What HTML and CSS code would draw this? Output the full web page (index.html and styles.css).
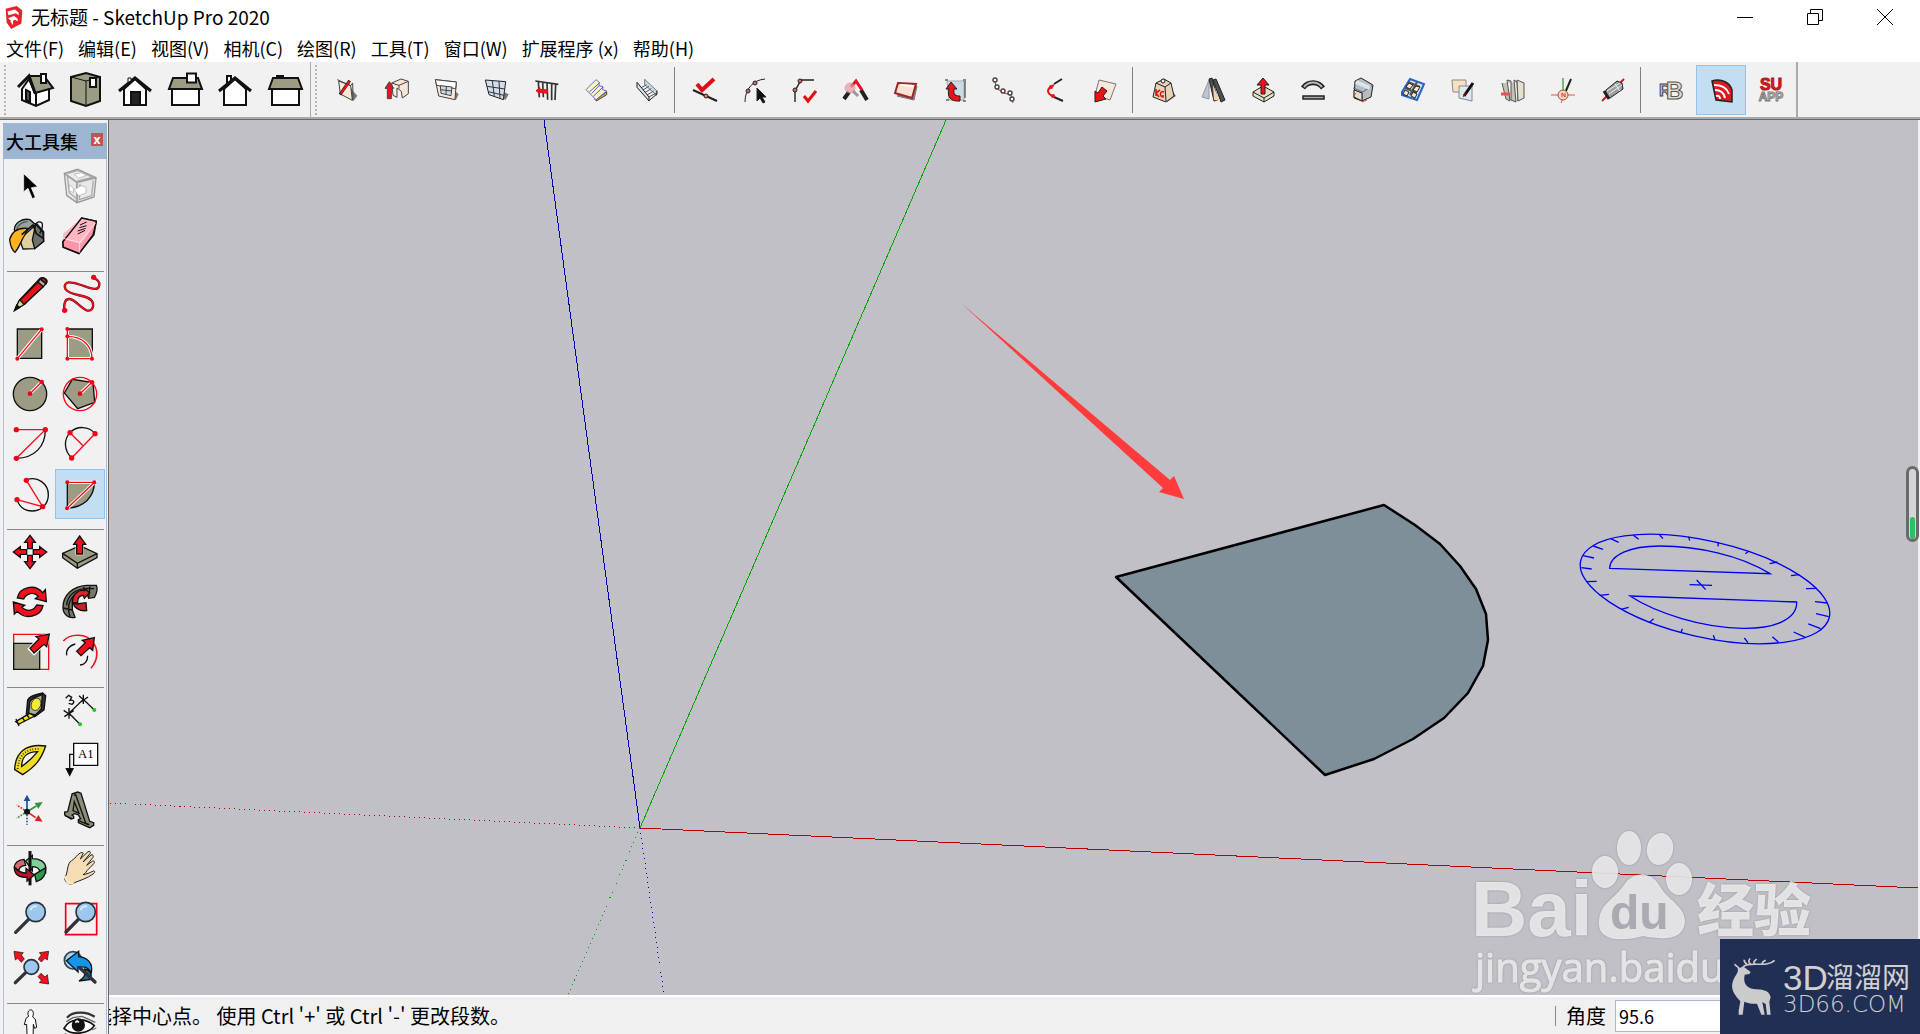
FILE: index.html
```html
<!DOCTYPE html>
<html lang="zh-CN">
<head>
<meta charset="utf-8">
<title>无标题 - SketchUp Pro 2020</title>
<link rel="stylesheet" href="styles.css">
</head>
<body>
<div class="app">
<header class="titlebar">
  <svg class="app-icon" viewBox="0 0 20 26" aria-hidden="true"><path d="M1 4 13 1 19 6 18 20 7 26 2 19Z" fill="#e6232a"/><path d="M3 7l8-2 4 3v3l-3-2-8 2zM4 14l6-2 4 3v3l-3-2-2 1v5l-3-4 1-1-3-2z" fill="#fff"/></svg>
  <h1>无标题 - SketchUp Pro 2020</h1>
  <div class="window-controls">
    <button aria-label="最小化"><svg viewBox="0 0 16 16"><path d="M0 8.500H16"/></svg></button>
    <button aria-label="还原"><svg viewBox="0 0 16 16"><path d="M.5 4.500h11v11H.5zM3.500 4.500v-4h12v11h-4"/></svg></button>
    <button aria-label="关闭"><svg viewBox="0 0 16 16"><path d="M0 0 16 16M16 0 0 16"/></svg></button>
  </div>
</header>
<nav class="menubar">
  <button>文件(F)</button><button>编辑(E)</button><button>视图(V)</button><button>相机(C)</button><button>绘图(R)</button><button>工具(T)</button><button>窗口(W)</button><button>扩展程序 (x)</button><button>帮助(H)</button>
</nav>
<div class="toolbars">
  <div class="toolbar" role="toolbar" aria-label="视图">
    <span class="grip"></span>
    <button class="tool" aria-label="等轴"><svg viewBox="0 0 50 50" class="ink"><path class="w" d="M12 24 19 14 25 28 39 23V35L26 41 12 35Z"/><path class="o" d="M19 11 34 11 43 23 25 28Z"/><path d="M8 22 19 11 25 28" stroke-width="3"/><path d="M16 25l4 2v10l-4-2z" fill="#555"/><path d="M26 28v12"/><path class="w" d="M31 9h5v9h-5z"/></svg></button>
    <button class="tool" aria-label="俯视图"><svg viewBox="0 0 50 50" class="ink"><path class="o" d="M11 12 26 8 40 12V36L26 41 11 36Z"/><path d="M11 12 26 16 40 12M26 16V40" stroke-width="1"/><path class="w" d="M30 13h6v9h-6z"/></svg></button>
    <button class="tool" aria-label="前视图"><svg viewBox="0 0 50 50" class="ink"><path class="w" d="M14 24 25 14 36 24V40H14Z"/><path d="M21 27h9v13h-9z" fill="#222"/><path d="M9 26 25 13 41 26" stroke-width="3"/><path class="w" d="M18 17v-4h3v2" stroke-width="1"/></svg></button>
    <button class="tool" aria-label="右视图"><svg viewBox="0 0 50 50" class="ink"><path class="w" d="M12 24H39V40H12Z"/><path class="o" d="M13 13H38L42 24H9Z"/><path class="w" d="M27 8.500h9v9h-9z"/></svg></button>
    <button class="tool" aria-label="后视图"><svg viewBox="0 0 50 50" class="ink"><path class="w" d="M17 20V11h4v6"/><path class="w" d="M14 24 25 14 36 24V40H14Z"/><path d="M9 26 25 13 41 26" stroke-width="3"/></svg></button>
    <button class="tool" aria-label="左视图"><svg viewBox="0 0 50 50" class="ink"><path class="w" d="M17 13v-2h6v2M12 24H39V40H12Z"/><path class="o" d="M13 13H38L42 24H9Z"/></svg></button>
  </div>
  <div class="toolbar" role="toolbar" aria-label="SUAPP">
    <span class="grip"></span>
    <button class="tool" aria-label="绘制墙体"><svg viewBox="66 18 150 150" class="fine"><path class="s" d="M148 75l10 20 14 15-12 17z"/><path class="t" d="M116 66l36 14 5 44-36-19z"/><path d="M112 62l40 18 6-8 1 38-2 14"/><path d="M149 65 120 107" stroke="#222" stroke-width="9"/><path d="M149 66 122 104" stroke="#e8141c" stroke-width="6"/></svg></button>
    <button class="tool" aria-label="拉线成面"><svg viewBox="216 18 150 150" class="fine"><path class="t" d="M275 72l28-12 22 7v37l-18 13-3-20-13-10v28l-12-6z"/><path d="M275 72l22 7 28-12M297 79v10"/><path class="r" d="M268 68l13 20h-7v31h-12V88h-7z"/></svg></button>
    <button class="tool" aria-label="墙体开窗"><svg viewBox="366 18 150 150" class="fine"><path class="s" d="M458 90l18 16-8 16-20-4z"/><path class="t" d="M406 62l63 7-4 53-49-11z"/><path class="w" d="M406 62l63 7-2 20-57-10z"/><path d="M421 80l35 4-3 26-30-7z" fill="#cbdbe7"/><path d="M439 82l-1 24M422 92l33 4"/></svg></button>
    <button class="tool" aria-label="玻璃幕墙"><svg viewBox="516 18 150 150" class="fine"><path class="s" d="M610 98l16 8-9 16-10-3z"/><path class="g" d="M556 63l61 5-7 54-43-15z" stroke="#222" stroke-width="3"/><path d="M577 65l6 48M597 66l3 52M561 82l54 8M565 98l47 11" stroke="#333" stroke-width="3"/></svg></button>
    <button class="tool" aria-label="线转栏杆"><svg viewBox="666 18 150 150" class="fine"><path d="M706 66l69 10M715 68l3 47M728 70l2 45M741 72l2 50M755 74v50M767 76l-2 47" stroke="#333" stroke-width="5"/><path class="r" d="M708 95l12-9v5l23 2-1 10-22-3-1 4z" stroke="#e01018"/></svg></button>
    <button class="tool" aria-label="双跑楼梯"><svg viewBox="816 18 150 150" class="fine"><path class="s" d="M914 92l8 13-33 20-8-4z"/><path d="M888 122l32-24v9l-31 19z" fill="#c8ab69"/><path d="M858 92l30-30 10 8-1 10 12 3-1 9 12 4-32 26z" fill="#faf3c8" stroke="#656ad1" stroke-width="3"/><path d="M898 72l-30 27M897 80l-22 24M909 84l-29 28" stroke="#555cc8" stroke-width="3"/></svg></button>
    <button class="tool" aria-label="自动扶梯"><svg viewBox="966 18 150 150" class="fine"><path d="M1034 61l36 34v14l-36-32z" fill="#c6dde8" stroke="#444" stroke-width="2"/><path d="M1020 88l20-11M1027 94l20-12M1034 101l20-12M1041 108l20-12M1047 114l22-12" stroke="#555" stroke-width="3"/><path d="M1011 70l36 44v12l-36-41z" fill="#d3e5ea" stroke="#222" stroke-width="3"/><path d="M1047 125l24-20v-10" stroke="#222" stroke-width="3"/></svg></button>
    <span class="sep"></span>
    <button class="tool" aria-label="修复直线"><svg viewBox="0 0 50 50" class="fine1"><path d="M13 25l24 11" stroke-width="2"/><path d="M17 19l5 6 12-11" stroke="#e20b12" stroke-width="4"/><circle cx="26" cy="31" r="2" fill="#e88264"/></svg></button>
    <button class="tool" aria-label="选连续线"><svg viewBox="0 0 50 50" class="fine1"><path d="M15 37c0-13 8-22 20-23"/><circle cx="18" cy="26" r="2" fill="#d56d5d"/><circle cx="25" cy="18" r="2" fill="#d56d5d"/><path d="M27 23v13l3-3 3 5 2-1-3-5h4z" fill="#111"/></svg></button>
    <button class="tool" aria-label="焊接线条"><svg viewBox="0 0 50 50" class="fine1"><path d="M15 37V26l6-11h13" stroke-width="1.400"/><circle cx="15" cy="25" r="2" fill="#d56d5d"/><circle cx="20" cy="16" r="2" fill="#d56d5d"/><path d="M24 31l4 5 8-10" stroke="#e20b12" stroke-width="3"/></svg></button>
    <button class="tool" aria-label="查找线头"><svg viewBox="0 0 50 50" class="fine1"><path d="M14 34l5-7M31 25l6 10" stroke-width="4"/><path d="M21 22l5-6 6 9" stroke="#e90c31" stroke-width="3"/><circle cx="20" cy="23" r="5" fill="#e99a9a" opacity=".7" stroke="#c99"/><path d="M23 26l5 5" stroke="#999" stroke-width="3"/></svg></button>
    <button class="tool" aria-label="生成面域"><svg viewBox="0 0 50 50" class="fine1"><path d="M17 31l17 4 3-14-3 2z" fill="#888" stroke="#777"/><path d="M18 18l18 1-4 14-17-5z" fill="#fbe2d2" stroke="#9b2727" stroke-width="2"/><path d="M20 20l13 1" stroke="#fff" stroke-width="2"/></svg></button>
    <button class="tool" aria-label="路径翻转"><svg viewBox="0 0 50 50" class="fine1"><path d="M17 16h17v19H19z" fill="#c9dbe4" stroke="#aaa"/><path d="M15 15h3M33 15h3M16 35h3M33 36h3M35 16v17"/><path d="M21 17l6 7h-3c-1 6 2 7 6 7v5c-10 1-13-5-11-12h-3z" fill="#ed1118"/></svg></button>
    <button class="tool" aria-label="路径阵列"><svg viewBox="0 0 50 50" class="fine1"><path d="M15 16l1 7 8 5 7 2 2 8" stroke="#d32424"/><g fill="#fff" stroke="#444" stroke-width="1.400"><circle cx="15" cy="15" r="2"/><circle cx="17" cy="22" r="2"/><circle cx="23" cy="26" r="2"/><circle cx="30" cy="28" r="2"/><circle cx="32" cy="34" r="2"/></g></svg></button>
    <button class="tool" aria-label="三维偏移"><svg viewBox="0 0 50 50" class="fine1"><path d="M24 19l8-5M24 32l9 4" stroke-width="2"/><path d="M24 20c-8 4-8 8 0 12" stroke="#e4141b" stroke-width="2"/><circle cx="21" cy="22" r="2" fill="#ed1118" stroke="none"/><circle cx="23" cy="31" r="2" fill="#ed1118" stroke="none"/></svg></button>
    <button class="tool" aria-label="滑动拉伸"><svg viewBox="0 0 50 50" class="fine1"><path d="M19 15l17 4-6 16-15-5z" fill="#fbe8dc" stroke="#777"/><path d="M22 22l5 4-4 5 3 3-11 3v-11l3 2z" fill="#ed1118"/></svg></button>
    <span class="sep"></span>
    <button class="tool" aria-label="体积计算"><svg viewBox="0 0 50 50" class="fine1"><path d="M30 20l8 11-9 6z" fill="#777" stroke="none"/><path d="M18 18l8-4 7 4 3 13-8 6-13-5z" fill="#e7d3b5"/><path d="M18 18l9 4 6-4M27 22l1 14"/><circle cx="25" cy="16" r="2" fill="#eee"/><path d="M18 24v7M18 28l4-3M18 28l3 4M26 27c-4-2-5 5-1 5v-2" stroke="#d21a18" stroke-width="1.600"/></svg></button>
    <button class="tool" aria-label="镜像物体"><svg viewBox="0 0 50 50" class="fine1"><path d="M14 32l7-17v19z" fill="#b6c7d6" stroke="#999"/><path d="M21 14l3-1 6 22-4 1zM25 15l3-1 9 21-4 2z" fill="#4c5154"/><path d="M25 20l7 16-6-1z" fill="#f3d1ac" stroke="none"/></svg></button>
    <button class="tool" aria-label="推拉"><svg viewBox="0 0 50 50" class="fine1"><path d="M15 27l10-6 11 6v4L26 37l-11-6z" fill="#e5dec5"/><path d="M15 27l11 6 10-6M26 33v4"/><path class="r" d="M25 13l6 7h-4v9h-4v-9h-4z"/></svg></button>
    <button class="tool" aria-label="形体弯曲"><svg viewBox="0 0 50 50" class="fine1"><path d="M15 23c5-7 15-7 20 0" stroke="#222" stroke-width="5"/><path d="M16 22c5-6 13-6 18 0" stroke="#bbb" stroke-width="2"/><path d="M15 31h21v3H15z" fill="#aaa" stroke-width="1.500"/></svg></button>
    <button class="tool" aria-label="超级圆角"><svg viewBox="0 0 50 50" class="fine1"><path d="M17 16l6-3 12 7-2 12-9 4-8-3z" fill="#b7bdc1"/><path d="M15 23l10 4 10-7M24 27v9" stroke="#667"/><path d="M16 25l8 3v8l-8-4z" fill="#e4dfcf"/><path d="M18 17l14 6" stroke="#d8e6ee" stroke-width="4"/><path d="M15 32l3-4M24 37l5-2" stroke="#e44"/></svg></button>
    <button class="tool" aria-label="组件"><svg viewBox="0 0 50 50" class="fine1"><path d="M14 27l8-13 14 5-7 16-15-5z" fill="#d8e2e9" stroke="#2864c7" stroke-width="2"/><path d="M20 17l12 5M17 23l12 5M22 30l7-13" stroke="#555" stroke-width="2"/><path d="M21 18l4 2-3 4-4-2zM28 21l4 1-3 5-4-2zM17 25l4 2-2 4-4-2zM25 27l4 2-2 4-4-2z" fill="#f2e7d2"/></svg></button>
    <button class="tool" aria-label="材质拾取"><svg viewBox="0 0 50 50" class="fine1"><path d="M14 15h14v12H15z" fill="#f7dfc2" stroke="#888"/><path d="M21 21h13v15l-13-3z" fill="#dfe8ee" stroke="#888"/><path d="M35 18 26 31" stroke="#111" stroke-width="3"/><path d="M28 28l-3 4" stroke="#e00"/></svg></button>
    <button class="tool" aria-label="场景分类"><svg viewBox="0 0 50 50" class="fine1"><path d="M14 18l4 16 4 2-3-21 4 1v19l5 2-2-22 3 2 1 19 5-4V17" fill="#c5c1b6" stroke="#555"/><path d="M29 15l7 3v15l-6 3z" fill="#e6dfcd" stroke="#555"/><path d="M13 29h9" stroke="#e65252" stroke-width="3"/></svg></button>
    <button class="tool" aria-label="坐标轴"><svg viewBox="0 0 50 50" class="fine1"><path d="M25 13v16" stroke="#7ab979" stroke-width="2"/><path d="M33 14l-6 14" stroke-width="2"/><path d="M13 30h24M23 38l3-7" stroke="#f04a4a" stroke-width="1"/><circle cx="25" cy="30" r="5" fill="#ffd3bd" stroke="#8c5d50"/><path d="M24 32v-4l3 4v-4" stroke="#e33"/></svg></button>
    <button class="tool" aria-label="智能推送"><svg viewBox="0 0 50 50" class="fine1"><path d="M14 36l22-22" stroke="#d11" stroke-width="2"/><path d="M18 25l11-9 5 2 1 6-13 9-5-4z" fill="#9b9d9f"/><path d="M19 26l13-8M21 29l13-9M27 19l5 7" stroke="#eee"/><path d="M16 26l5 8" stroke-width="3"/></svg></button>
    <span class="sep"></span>
    <button class="tool" aria-label="RB 渲染"><svg viewBox="0 0 50 50" class="fine1"><text x="13" y="31" class="logo-r">R</text><text x="20" y="34" class="logo-b">B</text></svg></button>
    <button class="tool active" aria-label="SUAPP 面板" aria-pressed="true"><svg viewBox="0 0 50 50" class="fine1"><path d="M16 16c10-3 18 2 20 9v12L20 35z" fill="#e01820" stroke-width="1.500"/><path d="M18 20c8 0 13 3 15 9M19 25c6 0 9 3 10 8M20 31c3-1 4 1 4 3" stroke="#fff" stroke-width="2"/></svg></button>
    <button class="tool" aria-label="SUAPP"><svg viewBox="0 0 50 50"><text x="25" y="25" class="logo-su">SU</text><text x="25" y="36" class="logo-app">APP</text></svg></button>
  </div>
</div>
<div class="workspace">
  <aside class="palette">
    <div class="palette-head"><h2>大工具集</h2><button class="palette-close" aria-label="关闭工具集">x</button></div>
    <div class="palette-body">
      <div class="tool-grid">
        <button class="tool" aria-label="选择"><svg viewBox="15 138 150 150"><path d="M71 176v54l13-10 13 31 9-4-12-29 19-3z" fill="#000" stroke="#fff" stroke-width="2"/></svg></button>
        <button class="tool" aria-label="制作组件"><svg viewBox="165 138 150 150" fill="none" stroke="#aaa" stroke-width="4"><path d="M193 175l40-12 55 25-6 58-51 17-31-22z" fill="#e9e9e9" stroke="#999"/><path d="M193 175l38 27 57-14M231 202v61" stroke="#999" stroke-width="5"/><path d="M202 182l6 51 22 18M240 206l-2 48 37-12 5-46M201 176l33-10 44 21-46 11"/><path d="M208 210l12 8v15l-12-6zM222 224l22-12 14 5v17l-22 8zM222 178l22-5 16 8-24 8z" fill="#fff" stroke-width="2"/></svg></button>
        <button class="tool" aria-label="材质"><svg viewBox="15 288 150 150" class="ink3"><path d="M74 321l38 7 19 22v29l-27 22-35 1-14-40z" fill="#e0cf9e"/><path d="M107 328l21 22 3 29-27 22-7-26z" fill="#6e706b"/><path d="M43 345c0-22 24-36 47-31l17 15-39 36z" fill="#96a49d"/><path d="M50 343c4-14 18-23 32-23" stroke="#555"/><path d="M29 374c8-29 31-36 53-34l-6 17c-15 23-18 41-31 55-9-7-14-20-16-38z" fill="#ffb321"/><path d="M107 333c0-12 12-16 19-9 5 10-1 20-7 32" stroke-width="4"/><path d="M65 359l34-29 10 26 21 14" stroke-width="5"/></svg></button>
        <button class="tool" aria-label="擦除"><svg viewBox="165 288 150 150" class="ink3"><path d="M189 379l56-70 44 10-10 41-42 56-48-19z" fill="#ff95a9"/><path d="M189 357l56-48 44 10-44 66-56-13z" fill="#ffb7c4" stroke="none"/><path d="M188 381 245 309l44 10-7 40-45 56-47-19z"/><path d="M190 370l49 13 48-59M239 383v31" stroke="#fff" stroke-width="2"/><path d="M233 357l22-11M233 348l24-8M238 338l22-6M240 330l20-9" stroke-width="3"/></svg></button>
      </div>
      <hr>
      <div class="tool-grid">
        <button class="tool" aria-label="直线"><svg viewBox="15 462 150 150" class="ink3"><path d="M44 586l13-29 62-66c10-8 26 3 21 12l-66 65z" fill="#ddd3a2"/><path d="M60 555l54-54 16 14-58 53z" fill="#e81116"/><path d="M114 501l7-9 17 14-8 9z" fill="#aaa"/><path d="M121 492c9-8 23 4 17 14z" fill="#b51d20"/><path d="M44 586l6-16 9 7z" fill="#111"/></svg></button>
        <button class="tool" aria-label="手绘线"><svg viewBox="165 462 150 150" class="ink3"><path d="M193 586c-2-24 4-35 16-34 16 1 32 27 51 34 14 4 23-8 18-24-10-25-65-17-81-39-7-13 1-24 17-20 35 3 80 36 84 7 1-10-4-16-17-21" stroke="#7c000b" stroke-width="7"/><path d="M193 586c-2-24 4-35 16-34 16 1 32 27 51 34 14 4 23-8 18-24-10-25-65-17-81-39-7-13 1-24 17-20 35 3 80 36 84 7 1-10-4-16-17-21" stroke="#e71627" stroke-width="4"/><g class="dots"><circle cx="194" cy="586" r="8"/><circle cx="281" cy="487" r="8"/></g></svg></button>
        <button class="tool" aria-label="矩形"><svg viewBox="15 612 150 150" class="ink3"><path class="o" d="M52 642h73v88H52z"/><path class="halo" d="M52 731l73-88"/><path class="red" d="M52 731l73-88"/><g class="dots"><circle cx="52" cy="731" r="6"/><circle cx="125" cy="643" r="6"/></g></svg></button>
        <button class="tool" aria-label="旋转矩形"><svg viewBox="165 612 150 150" class="ink3"><path class="o" d="M202 642h75v88h-75z"/><path class="halo" d="M202 642v89h74c0-40-30-67-74-67"/><path class="red" d="M202 642v89h74c0-40-30-67-74-67"/><g class="dots"><circle cx="202" cy="642" r="6"/><circle cx="202" cy="664" r="6"/><circle cx="202" cy="731" r="6"/><circle cx="276" cy="731" r="6"/></g></svg></button>
        <button class="tool" aria-label="圆"><svg viewBox="15 762 150 150" class="ink3"><circle class="o" cx="90" cy="837" r="50"/><path class="halo" d="M90 836l35-35"/><path class="red" d="M90 836l35-35"/><g class="dots"><circle cx="90" cy="836" r="7"/><circle cx="125" cy="801" r="7"/></g></svg></button>
        <button class="tool" aria-label="多边形"><svg viewBox="165 762 150 150" class="ink3"><path class="o" d="M193 834l24-41 62 10 5 59-51 19z"/><circle class="red" cx="240" cy="837" r="50"/><path class="halo" d="M240 836l36-34"/><path class="red" d="M240 836l36-34"/><g class="dots"><circle cx="240" cy="836" r="7"/><circle cx="276" cy="802" r="7"/></g></svg></button>
        <button class="tool" aria-label="圆弧"><svg viewBox="15 57 150 150" class="ink3"><path d="M136 89c0 50-32 85-87 86"/><path class="red" d="M49 89h87l-87 86"/><g class="dots"><circle cx="49" cy="89" r="8"/><circle cx="136" cy="89" r="8"/><circle cx="49" cy="175" r="8"/></g></svg></button>
        <button class="tool" aria-label="两点圆弧"><svg viewBox="165 57 150 150" class="ink3"><path d="M215 174c-24-23-24-55-5-76 20-21 57-21 75 3"/><path class="red" d="M215 174l70-73M210 98l39 39"/><g class="dots"><circle cx="210" cy="98" r="8"/><circle cx="285" cy="101" r="8"/><circle cx="215" cy="174" r="8"/></g></svg></button>
        <button class="tool" aria-label="三点圆弧"><svg viewBox="15 207 150 150" class="ink3"><path d="M79 240c34-14 66 12 66 44 0 29-22 49-48 49-23 0-39-12-46-34"/><path class="red" d="M79 241l49 79-77-21"/><g class="dots"><circle cx="79" cy="241" r="8"/><circle cx="51" cy="299" r="8"/><circle cx="128" cy="320" r="8"/></g></svg></button>
        <button class="tool active" aria-label="扇形" aria-pressed="true"><svg viewBox="165 207 150 150" class="ink3"><path class="o" d="M202 247h81c0 45-33 76-81 77z"/><path class="halo" d="M202 247h81l-81 78"/><path class="red" d="M202 247h81l-81 78"/><g class="dots"><circle cx="202" cy="247" r="6"/><circle cx="283" cy="247" r="6"/><circle cx="201" cy="325" r="6"/></g></svg></button>
      </div>
      <hr>
      <div class="tool-grid">
        <button class="tool" aria-label="移动"><svg viewBox="15 381 150 150" class="ink3"><g class="r"><path d="M90 406l16 21h-9v19H83v-19h-9z"/><path d="M90 506l16-21h-9v-19H83v19h-9z"/><path d="M40 456l21-16v9h19v14H61v9z"/><path d="M140 456l-21-16v9h-19v14h19v9z"/></g></svg></button>
        <button class="tool" aria-label="推/拉"><svg viewBox="165 381 150 150" class="ink3"><path class="o" d="M188 460l52-23 51 24v12l-59 32-44-32z"/><path d="M188 460l44 30 59-29M232 490v15"/><path d="M239 408l18 25h-9v29h-18v-29h-9z" stroke="#fff" stroke-width="7"/><path class="r" d="M239 408l18 25h-9v29h-18v-29h-9z"/></svg></button>
        <button class="tool" aria-label="旋转"><svg viewBox="15 531 150 150" class="ink3"><path class="r" d="M52 594c7-35 54-43 76-16l8-9 3 36-33-9 9-7c-13-15-36-10-44 8z"/><path class="r" d="M129 617c-7 35-54 43-77 17l-9 8-3-36 34 10-9 6c16 15 37 10 45-7z"/></svg></button>
        <button class="tool" aria-label="路径跟随"><svg viewBox="165 531 150 150" class="ink3"><path d="M189 622c0-36 30-64 70-66h30c4 10 1 25-6 36l-17 3c-2-14-14-20-27-15-18 7-24 24-22 50l8 22c-20 4-36-8-36-30z" fill="#77796a"/><path d="M200 616c2-30 26-50 62-51l20 1M210 650c-12-36 2-66 34-76M190 624l26 6M270 559l-4 34" stroke-width="4"/><path d="M217 608c0-26 18-40 37-36l-2-8 17 14-16 17-3-9c-12 0-18 8-17 22z" fill="#dc252a"/><path d="M218 608l12 4 28-4 2 24c-20 2-34-4-42-24z" fill="#c42223"/></svg></button>
        <button class="tool" aria-label="缩放"><svg viewBox="15 681 150 150" class="ink3"><path class="red" d="M41 703h105v105H41z"/><path class="o" d="M41 730h78v78H41z"/><path d="M148 702l-8 38-8-7-30 29-15-15 27-30-7-5z" stroke="#fff" stroke-width="7"/><path class="r" d="M148 702l-8 38-8-7-30 26-12-14 27-28-9-7z"/></svg></button>
        <button class="tool" aria-label="偏移"><svg viewBox="165 681 150 150" class="ink3"><path d="M190 723c21-24 70-23 88 3 17 20 18 52-5 79" stroke="#ed1423" stroke-width="5"/><path d="M200 766c-3-17 9-30 26-34M240 795c14 0 23-12 23-28" stroke-width="4"/><path class="r" d="M283 713l-5 38-9-8-26 24-13-13 26-26-9-7z"/></svg></button>
      </div>
      <hr>
      <div class="tool-grid">
        <button class="tool" aria-label="卷尺"><svg viewBox="15 15 150 150" class="ink3"><path d="M83 60c6-15 28-16 45-21l9 8-5 43-28 20-25-8z" fill="#303630"/><path d="M89 66c9-16 28-18 38-22l-3 43-18 18-20-5z" fill="#aaa"/><ellipse cx="108" cy="73" rx="14" ry="19" fill="#f4ea31" stroke-width="2" transform="rotate(20 108 73)"/><path d="M47 125l42-25 15 8-47 24z" fill="#f2e622"/><path d="M48 117l9 21M67 113l7 10M81 105l7 9" stroke-width="4"/></svg></button>
        <button class="tool" aria-label="尺寸"><svg viewBox="165 15 150 150" class="ink3"><path d="M240 133l-33-33 43-42 33 32M191 91l29 20M207 84v32M193 110l28-18M237 47l27 24M250 44v28M238 69l26-18"/><path d="M197 55l9-9 9 6-5 9c12-3 15 7 6 12l-10-3"/><g fill="#22c522" stroke="none"><circle cx="240" cy="133" r="6"/><circle cx="283" cy="90" r="6"/></g></svg></button>
        <button class="tool" aria-label="量角器"><svg viewBox="15 165 150 150" class="ink3"><path fill-rule="evenodd" d="M44 269c2-52 34-79 93-71-14 42-32 62-69 86zM65 259c22-14 34-27 48-44-32 0-48 17-48 44z" fill="#f0dd22" stroke-width="4"/><path d="M53 267c4-43 25-62 68-60" stroke-dasharray="2 6" stroke-width="6"/></svg></button>
        <button class="tool" aria-label="文字"><svg viewBox="165 165 150 150" class="ink3"><path class="w" d="M221 190h72v66h-72z"/><path d="M221 223h-12v54"/><path d="M199 266h20l-10 20z" fill="#000"/><text x="234" y="233" class="label-a1">A1</text></svg></button>
        <button class="tool" aria-label="轴"><svg viewBox="15 315 150 150" class="ink3"><path d="M81 395v-35" stroke="#174f99" stroke-width="5"/><path d="M81 344l10 19H71z" fill="#174f99" stroke="none"/><path d="M81 395l28-17" stroke="#369239" stroke-width="5"/><path d="M128 366l-13 20-11-17z" fill="#369239" stroke="none"/><path d="M81 395l26 18" stroke="#dc1d28" stroke-width="5"/><path d="M128 425l-24-3 11-17z" fill="#dc1d28" stroke="none"/><g stroke-width="5" stroke-dasharray="5 4"><path d="M81 395v39" stroke="#174f99"/><path d="M81 395l-31 20" stroke="#369239"/><path d="M81 395l-31-20" stroke="#dc1d28"/></g><circle cx="81" cy="395" r="7" fill="#111"/></svg></button>
        <button class="tool" aria-label="三维文字"><svg viewBox="165 315 150 150" class="ink3"><path d="M216 342l17-6 10 4 26 84 12 4v8l-12 7-34-15v-9l7-3-8-12-11-3-7 4 5 4v6l-8 2-19-12v-9l9-1 12-48z" fill="#8c8d78"/><path d="M222 346l5-2 30 85 11 5M223 365l-4 27 18 8zM195 407l21 9M235 421l31 14" stroke-width="4"/></svg></button>
      </div>
      <hr>
      <div class="tool-grid">
        <button class="tool" aria-label="环绕观察"><svg viewBox="15 489 150 150" class="ink3"><path d="M77 543l20-17v10c22 0 39 9 40 26v17l-18-4c0-9-9-14-22-15v12z" fill="#80ce9c"/><path d="M104 583l10-6 23-14c1 22-8 36-28 42z" fill="#2b9849"/><path d="M43 562c1-15 12-22 29-24l5 18c-13 1-20 7-20 16z" fill="#d16c68"/><path d="M90 513v103" stroke-width="9"/><path d="M43 563c15 14 24 16 35 16v-14l25 20-22 18v-11c-21 0-38-7-38-29z" fill="#bd142c"/></svg></button>
        <button class="tool" aria-label="平移"><svg viewBox="165 489 150 150"><path d="M194 595c10-18 7-33 13-44 2-7 12-11 17-16 13-17 23-20 26-16l-9 18 23-22c6-3 9 2 6 6l-21 25 24-21c6-3 8 3 6 7l-19 24 18-13c5-2 6 4 4 7l-21 22c-4 7-8 11-12 12 10-1 21-6 31-11 7 0 5 5-1 9-17 13-39 19-55 26-12 10-29 1-30-13z" fill="#f6ddb6" stroke="#222" stroke-width="3"/><path d="M194 589l10 19 17 3" stroke="#f8e7bd" stroke-width="7" fill="none"/></svg></button>
        <button class="tool" aria-label="缩放视图"><svg viewBox="15 639 150 150"><path d="M47 757l41-41" class="handle"/><circle cx="107" cy="696" r="29" class="lens"/><path d="M91 691c3-10 12-13 20-12" class="shine"/></svg></button>
        <button class="tool" aria-label="缩放窗口"><svg viewBox="165 639 150 150"><path d="M197 671h93v93h-93z" fill="none" stroke="#f00013" stroke-width="5"/><path d="M198 756l40-41" class="handle"/><circle cx="257" cy="696" r="29" class="lens"/><path d="M241 691c3-10 12-13 20-12" class="shine"/></svg></button>
        <button class="tool" aria-label="充满视窗"><svg viewBox="15 789 150 150"><path d="M46 908l31-30" class="handle"/><circle cx="94" cy="861" r="22" class="lens"/><g class="r" stroke="#111" stroke-width="2"><path d="M42 814l28 4-6 7 9 12-9 10-11-12-7 5z"/><path d="M146 814l-28 4 6 7-9 12 9 9 11-11 7 5z"/><path d="M146 912l-28-4 6-7-10-11 9-10 12 11 7-7z"/></g></svg></button>
        <button class="tool" aria-label="上一视图"><svg viewBox="165 789 150 150" class="ink3"><circle cx="219" cy="841" r="26" fill="#a9cfeb" stroke="#345" stroke-width="5"/><path d="M199 842l37-28v16c26 2 44 20 38 48-13-20-20-18-40-17v15z" fill="#1595e9"/><path d="M237 903c14-8 22-19 17-36 15 2 22 11 19 31z" fill="#1f669b"/><path d="M240 864l45 42" class="handle"/></svg></button>
      </div>
      <hr>
      <div class="tool-grid">
        <button class="tool" aria-label="定位相机"><svg viewBox="15 963 150 150"><path d="M84 1004c-3-18 18-20 16-1l-2 8 8 7 4 24-6 3-4-12-1 60H82l-2-60-7 1 5-19 8-6z" fill="#fff" stroke="#111" stroke-width="3"/></svg></button>
        <button class="tool" aria-label="绕轴旋转"><svg viewBox="165 963 150 150" class="ink3"><path d="M201 1013c20-22 61-17 83-3" stroke="#333" stroke-width="7"/><path d="M192 1045c16-31 63-33 91-8-14 23-66 32-91 8z" fill="#fff" stroke-width="5"/><circle cx="235" cy="1035" r="18" fill="#111"/><path d="M226 1028l5-5 6 4" stroke="#fff" stroke-width="5"/><path d="M199 1025l20-12 27-4 40 18" stroke="#666" stroke-width="4"/><path d="M194 1061l20 9M276 1050l13-6" stroke="#777" stroke-width="4"/></svg></button>
      </div>
    </div>
  </aside>
  <main class="stage">
    <div class="viewport">
      <svg class="scene" viewBox="109 120 1809 875" role="img" aria-label="模型视图">
        <g fill="none" shape-rendering="crispEdges">
          <path d="M544 120 640 828" stroke="#0000b0"/>
          <path d="M946 120 640 828" stroke="#00a800"/>
          <path d="M640 828 1918 888" stroke="#c00000"/>
          <path d="M640 828 109 803" stroke="#b00000" stroke-dasharray="1 4"/>
          <path d="M640 828 568 995" stroke="#00a800" stroke-dasharray="1 4"/>
          <path d="M640 828 664 995" stroke="#0000b0" stroke-dasharray="1 4"/>
        </g>
        <path d="M1116 577 1384 505 1415 525 1440 544 1460 566 1476 589 1486 614 1488 640 1483 666 1468 693 1444 718 1413 739 1374 759 1325 775Z" fill="#7e8f99" stroke="#000" stroke-width="2.500" stroke-linejoin="round"/>
        <path d="M962 304 1170 480 1174 476 1184 499 1159 492 1163 488Z" fill="#ff3b3b"/>
        <ellipse cx="1705" cy="589" rx="127.500" ry="48" transform="rotate(12.800 1705 589)" fill="none" stroke="#0000f0" stroke-width="1.300"/>
        <g transform="translate(1560 440) scale(.33333)" fill="none" stroke="#0000f0" stroke-width="4">
          <path d="M149 385 630 401C540 345 410 318 300 318 210 318 150 345 149 385ZM210 468 710 486C712 535 650 566 550 565 430 564 290 520 210 468ZM389 434 456 436M410 420 437 449"/>
          <path d="M152 296l24 11M220 286l16 12M299 285l10 11M386 290l3 12M475 306l-1 13M567 333l-11 8M652 366l-23 5M718 404l-25 3M771 445l-33 1M802 489l-37-4M806 530l-38-9M782 566l-37-14M736 592l-35-16M655 606l-18-16M564 608l-11-14M465 600l-5-14M363 578l4-12M267 548l14-12M183 508l23-6M119 466l28-3M79 425l31-1M64 383l31 4M69 347l33 7M100 318l29 10"/>
        </g>
      </svg>
      <div class="gauge"><span></span></div>
      <svg class="watermark" viewBox="1470 825 350 170" aria-label="Baidu 经验">
        <g fill="#fff" opacity=".72">
          <text x="1471" y="936" class="wm-bai">Bai</text>
          <ellipse cx="1605" cy="872" rx="13" ry="16"/><ellipse cx="1629" cy="848" rx="12" ry="17"/><ellipse cx="1660" cy="849" rx="13" ry="16" transform="rotate(12 1660 849)"/><ellipse cx="1679" cy="879" rx="13" ry="16"/>
          <path d="M1599 921c1-18 16-22 25-36 8-13 26-15 35 0 9 16 25 20 26 36-1 17-16 20-42 15-26 7-46 3-44-15z"/>
          <text x="1697" y="931" class="wm-cn">经验</text>
          <text x="1475" y="982" class="wm-url">jingyan.baidu</text>
        </g>
        <text x="1610" y="929" class="wm-du">du</text>
      </svg>
    </div>
    <footer class="statusbar">
      <p>选择中心点。 使用 Ctrl '+' 或 Ctrl '-' 更改段数。</p>
      <div class="measure"><label for="angle">角度</label><input id="angle" type="text" value="95.6"></div>
    </footer>
  </main>
</div>
<div class="badge">
  <svg viewBox="1720 939 200 95" aria-label="3D溜溜网 3D66.COM">
    <g transform="translate(1440 800) scale(.33333)"><path d="M884 490l16 14 9-5 11 8 12 9-4 6-14 2c-4 20 0 38 26 43 25 3 46 0 52 24l-4 15 4 38h-11l-4-32-10-6 7 38h-10l-13-33c-15 1-30-2-38-6l-5 39h-12v-12l5-28c-16-18-28-32-24-54 6-26 20-28 16-46l-10-8z" fill="#cbcbcb"/><path d="M910 500c20-18 70 5 94-19M921 493c-7-6-10-8-8-14M931 491c-7-4-5-9-1-16M945 492c-7-6-2-8 5-15M967 494c-3-8 5-10 10-13" fill="none" stroke="#cbcbcb" stroke-width="5"/></g>
    <g fill="#d0d0d0"><text x="1783" y="990" class="b-3d">3D</text><text x="1826" y="988" class="b-cn">溜溜网</text><text x="1783" y="1012" class="b-url">3D66.COM</text></g>
  </svg>
</div>
</div>
</body>
</html>
```

FILE: styles.css
```css
* { box-sizing: border-box; }
body { margin: 0; font-family: "Noto Sans CJK SC", "Noto Sans", sans-serif; font-size: 20px; line-height: 24px; color: #000; background: #fff; }
h1, h2, p { margin: 0; font-size: inherit; font-weight: 400; }
button { font: inherit; color: inherit; border: 0; padding: 0; background: none; }
.app { position: relative; display: flex; flex-direction: column; height: 100vh; overflow: hidden; }

.titlebar { display: flex; align-items: center; height: 34px; padding-left: 4px; gap: 7px; flex: none; font-size: 19px; }
.app-icon { width: 20px; height: 24px; }
.window-controls { margin-left: auto; display: flex; height: 100%; }
.window-controls button { width: 70px; display: grid; place-items: center; }
.window-controls svg { width: 16px; height: 16px; fill: none; stroke: #000; }

.menubar { display: flex; gap: 14px; height: 28px; padding-left: 6px; align-items: center; flex: none; font-size: 18px; }
.menubar button { white-space: nowrap; }

.toolbars { display: flex; height: 57px; flex: none; background: #f1f1f1; border-bottom: 2px solid #a9a9a9; }
.toolbar { display: flex; align-items: center; padding: 3px 0 2px 4px; border-right: 1px solid #ababab; flex: none; }
.toolbar + .toolbar { border-right-width: 2px; }
.grip { width: 6px; height: 50px; border-left: 2px dotted #b4b4b4; }
.toolbar + .toolbar .grip { margin-right: 1px; }
.sep { width: 1px; height: 46px; margin: 0 5px 0 2px; background: #808080; }
.tool { width: 50px; height: 50px; flex: none; display: block; }
.tool svg { display: block; width: 50px; height: 50px; }
.tool.active { background: #c3ddf3; box-shadow: inset 0 0 0 1px #90c4ee; }

.ink { fill: none; stroke: #111; stroke-width: 2; }
.ink3 { fill: none; stroke: #111; stroke-width: 4; }
.fine { fill: none; stroke: #444; stroke-width: 3; }
.fine1 { fill: none; stroke: #222; stroke-width: 1; }
.o { fill: #9c9b84; }
.w { fill: #fff; }
.r { fill: #f1101c; }
.t { fill: #fae7d7; }
.g { fill: #cfdeea; }
.s { fill: #777; stroke: none; }
.red { stroke: #f40c1c; stroke-width: 4; fill: none; }
.halo { stroke: #fff; stroke-width: 10; fill: none; }
.dots { fill: #f50018; stroke: none; }
.handle { fill: none; stroke: #30343a; stroke-width: 10; stroke-linecap: round; }
.lens { fill: #9dc7ed; stroke: #2a333d; stroke-width: 5; }
.shine { fill: none; stroke: #d4ebff; stroke-width: 6; }
.label-a1 { font: 38px "Liberation Serif", serif; fill: #000; stroke: none; }
.logo-r { font: bold 17px "Liberation Sans", sans-serif; fill: #b8c8cf; stroke: #444; }
.logo-b { font: bold 24px "Liberation Sans", sans-serif; fill: #e4dccd; stroke: #555; }
.logo-su { font: bold 16px "Liberation Sans", sans-serif; fill: #d71b25; stroke: #b1161d; text-anchor: middle; }
.logo-app { font: bold 12px "Liberation Sans", sans-serif; fill: #f3e2d2; stroke: #777; text-anchor: middle; }

.workspace { display: flex; flex: 1; min-height: 0; border-top: 1px solid #696969; }
.palette { width: 109px; flex: none; display: flex; flex-direction: column; padding: 3px 1px 0 3px; background: #f1f1f1; border-right: 1px solid #696969; overflow: hidden; }
.palette-head { display: flex; align-items: center; justify-content: space-between; height: 36px; padding: 0 4px 0 3px; background: #9db5d1; flex: none; }
.palette-head h2 { font-size: 18px; font-weight: 500; }
.palette-close { align-self: flex-start; width: 12px; height: 13px; margin-top: 10px; background: #c75050; color: #fff; font: bold 12px/10px "Noto Sans", sans-serif; }
.palette-body { flex: 1; min-height: 0; padding: 2px 0 0 1px; border: solid #a9c1dc; border-width: 0 1px; overflow: hidden; }
.tool-grid { display: grid; grid-template-columns: 50px 50px; }
.palette hr { height: 1px; margin: 10px 2px -3px; border: 0; background: #888; }

.stage { flex: 1; min-width: 0; display: flex; flex-direction: column; }
.viewport { position: relative; flex: 1; min-height: 0; background: #c0c0c6; border-right: 2px solid #f1f1f1; }
.scene { position: absolute; inset: 0; width: 100%; height: 100%; }
.gauge { position: absolute; right: -1px; top: 346px; width: 13px; height: 76px; border: 3px solid #6a6a6a; border-radius: 7px; background: #d5d5da; display: flex; align-items: flex-end; justify-content: center; }
.gauge span { width: 5px; height: 22px; border-radius: 3px; background: #2fbf61; }
.watermark { position: absolute; right: 98px; bottom: 0; width: 350px; height: 170px; filter: drop-shadow(0 0 1px #88888f); }
.wm-bai { font: bold 78px "Liberation Sans", sans-serif; }
.wm-cn { font: 900 57px "Noto Sans CJK SC", sans-serif; }
.wm-url { font: 500 40px "Open Sans", sans-serif; stroke: #fff; }
.wm-du { font: bold 48px "Liberation Sans", sans-serif; fill: #aaaab1; }

.statusbar { display: flex; align-items: center; height: 39px; flex: none; background: #f0f0f0; border-top: 2px solid #fff; overflow: hidden; }
.statusbar p { flex: 1; min-width: 0; text-indent: -17px; overflow: hidden; white-space: nowrap; }
.measure { display: flex; align-items: center; width: 365px; }
.measure label { padding-left: 10px; width: 60px; border-left: 1px solid #888; line-height: 20px; }
.measure input { flex: 1; min-width: 0; height: 32px; padding: 0 3px; border: 1px solid #a9b8d2; background: #fff; font: inherit; font-size: 18px; }

.badge { position: absolute; right: 0; bottom: 0; width: 200px; height: 95px; background: #222f54; }
.badge svg { display: block; width: 200px; height: 95px; }
.b-3d { font: 35px "Liberation Sans", sans-serif; }
.b-cn { font: 28px "Noto Sans CJK SC", sans-serif; }
.b-url { font: 200 23px "DejaVu Sans", sans-serif; }
```
